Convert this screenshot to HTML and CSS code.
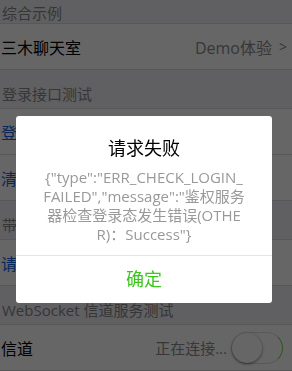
FILE: index.html
```html
<!DOCTYPE html>
<html lang="zh">
<head>
    <meta charset="UTF-8">
    <meta name="viewport" content="width=device-width, initial-scale=1.0">
    <title>Wafer Demo</title>
    <link rel="stylesheet" href="styles.css">
</head>
<body>
    <div class="page">
        <div class="section-title first">综合示例</div>
        <div class="cells">
            <div class="cell">
                <span class="cell-label">三木聊天室</span>
                <span class="cell-extra">Demo体验<span class="arrow">&gt;</span></span>
            </div>
        </div>

        <div class="section-title">登录接口测试</div>
        <div class="cells">
            <div class="cell"><span class="cell-label link">登录</span></div>
            <div class="cell"><span class="cell-label link">清除会话</span></div>
        </div>

        <div class="section-title">带会话请求测试</div>
        <div class="cells">
            <div class="cell"><span class="cell-label link">请求</span></div>
        </div>

        <div class="section-title">WebSocket 信道服务测试</div>
        <div class="cells">
            <div class="cell">
                <span class="cell-label">信道</span>
                <span class="cell-extra status">正在连接...<span class="switch"><span class="knob"></span></span></span>
            </div>
        </div>
    </div>

    <div class="mask">
        <div class="dialog">
            <div class="dialog-title">请求失败</div>
            <div class="dialog-body">{"type":"ERR_CHECK_LOGIN_<br>FAILED","message":"鉴权服务<br>器检查登录态发生错误(OTHE<br>R)：Success"}</div>
            <div class="dialog-footer">确定</div>
        </div>
    </div>
</body>
</html>
```

FILE: styles.css
```css
body {
    margin: 0;
    background-color: #efeff4;
    font-family: "Open Sans", "Noto Sans CJK SC", sans-serif;
    overflow: hidden;
}
.section-title {
    height: 38px;
    box-sizing: border-box;
    padding: 14px 2px 0;
    font-size: 15px;
    line-height: 20px;
    color: #888888;
}
.section-title.first {
    height: 23px;
    padding-top: 3px;
}
.cells {
    background-color: #ffffff;
    border-top: 1px solid #dcdcdc;
    border-bottom: 1px solid #dcdcdc;
}
.cell {
    display: flex;
    align-items: center;
    justify-content: space-between;
    height: 45px;
    padding: 0 5px 0 1px;
    font-size: 16px;
}
.cell + .cell {
    border-top: 1px solid #dcdcdc;
}
.cell-label {
    color: #000000;
}
.link {
    color: #1665e6;
}
.cell-extra {
    display: flex;
    align-items: center;
    color: #8a8a8a;
}
.arrow {
    margin-left: 7px;
    font-size: 14px;
}
.status {
    font-size: 15px;
}
.switch {
    position: relative;
    width: 50px;
    height: 30px;
    margin-left: 4px;
    margin-right: 4px;
    border: 1px solid #dfdfdf;
    border-right-color: #7fcf6a;
    border-radius: 16px;
    background-color: #ffffff;
}
.knob {
    position: absolute;
    top: 0;
    left: 0;
    width: 30px;
    height: 30px;
    border-radius: 50%;
    background-color: #ffffff;
    box-shadow: 0 1px 3px rgba(0, 0, 0, 0.5);
}
.mask {
    position: fixed;
    top: 0;
    left: 0;
    right: 0;
    bottom: 0;
    background-color: rgba(0, 0, 0, 0.6);
    display: flex;
    justify-content: flex-start;
    align-items: flex-start;
    padding: 116px 0 0 16px;
}
.dialog {
    width: 256px;
    background-color: #ffffff;
    border-radius: 3px;
    text-align: center;
    overflow: hidden;
}
.dialog-title {
    padding: 21px 20px 8px;
    font-size: 18px;
    line-height: 23px;
    color: #000000;
}
.dialog-body {
    padding: 0 20px 11px;
    font-size: 15px;
    line-height: 19px;
    color: #999999;
    word-break: break-all;
}
.dialog-footer {
    border-top: 1px solid #e5e5e5;
    height: 47px;
    line-height: 47px;
    font-size: 18px;
    color: #3cc51f;
}
```
